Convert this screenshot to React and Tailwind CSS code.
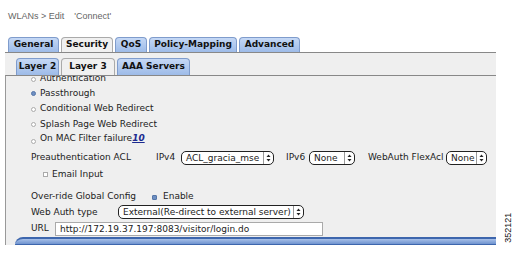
import React from "react";

const Arrows = () => (
  <svg width="5" height="8" viewBox="0 0 5 8" className="block">
    <path d="M2.5 0.5 L4.5 3 L0.5 3 Z" fill="#222" />
    <path d="M2.5 7.5 L4.5 5 L0.5 5 Z" fill="#222" />
  </svg>
);

const Select = ({ value, className }) => (
  <div
    className={`flex items-center h-[14px] bg-white border border-[#222] rounded-[5px] overflow-hidden ${className}`}
  >
    <span className="flex-1 pl-[4px] whitespace-nowrap overflow-hidden leading-[12px]">{value}</span>
    <span className="flex items-center justify-center w-[10px] h-full border-l border-[#999]">
      <Arrows />
    </span>
  </div>
);

const Radio = ({ checked }) => (
  <span
    className={`inline-block w-[5px] h-[5px] rounded-full border ${
      checked ? "bg-[#6e8fc2] border-[#5576a8]" : "bg-white border-[#aaa]"
    }`}
  />
);

const tabs = [
  { label: "General", w: "w-[51px]" },
  { label: "Security", w: "w-[52px]", active: true },
  { label: "QoS", w: "w-[32px]" },
  { label: "Policy-Mapping", w: "w-[88px]" },
  { label: "Advanced", w: "w-[61px]" },
];

const subTabs = [
  { label: "Layer 2", w: "w-[43px]" },
  { label: "Layer 3", w: "w-[54px]", active: true },
  { label: "AAA Servers", w: "w-[73px]" },
];

const Tab = ({ label, w, active }) => (
  <div
    className={`${w} h-full flex items-center justify-center rounded-t-[4px] border border-b-0 text-[9px] font-bold text-[#111] ${
      active
        ? "bg-[#f0f0f0] border-[#aaa]"
        : "bg-gradient-to-b from-[#c5d8f5] to-[#9dbbe8] border-[#7f9ccc]"
    }`}
  >
    {label}
  </div>
);

export default function App() {
  return (
    <div className="relative w-[516px] h-[263px] bg-white overflow-hidden font-['DejaVu_Sans',sans-serif] text-[9px] text-[#222]">
      {/* Breadcrumb */}
      <div className="h-[37px] pl-[8px] pt-[10px] font-['Liberation_Sans',sans-serif] text-[9px] text-[#666]">
        WLANs &gt; Edit &nbsp;&nbsp;&nbsp;'Connect'
      </div>

      {/* Main tabs */}
      <div className="flex gap-[2px] pl-[8px] h-[15px]">
        {tabs.map((t) => (
          <Tab key={t.label} {...t} />
        ))}
      </div>

      {/* Panel */}
      <div className="ml-[5px] w-[491px] border-t border-[#888] bg-[#efefef]">
        <div className="flex gap-[2px] pl-[11px] pt-[5px] h-[22px]">
          {subTabs.map((t) => (
            <Tab key={t.label} {...t} />
          ))}
        </div>
        <div className="border-t border-[#888] border-l border-l-[#999] h-[170px] flex flex-col">
          {/* list scrolled under the tab bar */}
          <div className="h-[9px] overflow-hidden">
            <div className="flex items-center gap-[4px] pl-[25px] -mt-[4px] h-[14px]">
              <Radio />
              <span>Authentication</span>
            </div>
          </div>
          <div className="flex items-center gap-[4px] pl-[25px] h-[14px] mt-[2px]">
            <Radio checked />
            <span>Passthrough</span>
          </div>
          <div className="flex items-center gap-[4px] pl-[25px] h-[15px] mt-[1px]">
            <Radio />
            <span>Conditional Web Redirect</span>
          </div>
          <div className="flex items-center gap-[4px] pl-[25px] h-[15px] mt-[1px]">
            <Radio />
            <span>Splash Page Web Redirect</span>
          </div>
          <div className="flex gap-[4px] pl-[25px] h-[17px]">
            <span className="self-end mb-[1px]">
              <Radio />
            </span>
            <span className="leading-[12px]">
              On MAC Filter failure
              <a className="font-bold italic underline text-[#1b2a8f]">10</a>
            </span>
          </div>
          <div className="flex items-center h-[18px] pl-[25px]">
            <span className="w-[125px]">Preauthentication ACL</span>
            <span className="w-[25px]">IPv4</span>
            <Select value="ACL_gracia_mse" className="w-[93px]" />
            <span className="ml-[12px] w-[23px]">IPv6</span>
            <Select value="None" className="w-[46px]" />
            <span className="ml-[13px] w-[78px]">WebAuth FlexAcl</span>
            <Select value="None" className="w-[41px]" />
          </div>
          <div className="flex items-center gap-[4px] pl-[37px] h-[15px]">
            <span className="inline-block w-[5px] h-[5px] border border-[#aaa] bg-white" />
            <span>Email Input</span>
          </div>
          <div className="h-[8px]" />
          <div className="flex items-center h-[15px] pl-[25px]">
            <span className="w-[121px]">Over-ride Global Config</span>
            <span className="inline-block w-[5px] h-[5px] rounded-[1px] bg-[#6e8fc2] border border-[#5576a8]" />
            <span className="ml-[6px]">Enable</span>
          </div>
          <div className="flex items-center h-[16px] pl-[25px]">
            <span className="w-[87px]">Web Auth type</span>
            <Select value="External(Re-direct to external server)" className="w-[186px]" />
          </div>
          <div className="flex items-center h-[16px] pl-[25px] mt-[1px]">
            <span className="w-[24px]">URL</span>
            <div className="w-[268px] h-[14px] bg-white border border-[#aaa] pl-[4px] leading-[12px]">
              http://172.19.37.197:8083/visitor/login.do
            </div>
          </div>
          <div className="flex-1" />
          <div className="ml-[9px] h-[8px] rounded-tl-[12px] border-t-2 border-[#3d66ad] bg-gradient-to-b from-[#a8c0e8] to-[#6f93cf] border-b border-b-[#3d66ad]" />
        </div>
      </div>

      {/* Figure number */}
      <div className="absolute left-[497px] top-[224px] w-[24px] -rotate-90 text-center font-['Liberation_Sans',sans-serif] text-[9px] text-[#111]">
        352121
      </div>
    </div>
  );
}
